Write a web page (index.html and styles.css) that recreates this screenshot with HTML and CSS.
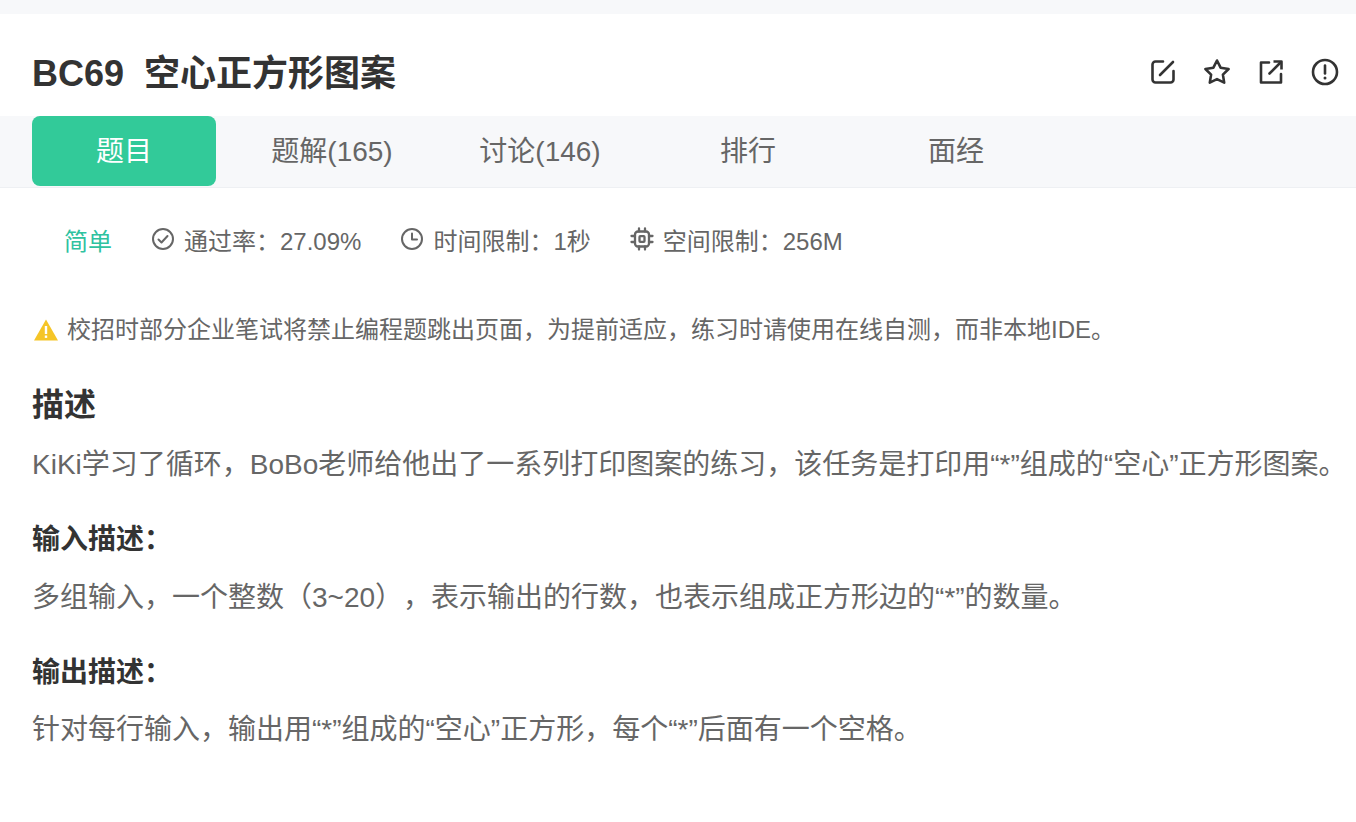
FILE: index.html
```html
<!DOCTYPE html>
<html lang="zh-CN">
<head>
<meta charset="utf-8">
<title>BC69 空心正方形图案</title>
<link rel="stylesheet" href="styles.css">
</head>
<body>
<div class="top-strip"></div>
<header class="head">
  <h1 class="title">BC69&nbsp; 空心正方形图案</h1>
  <div class="actions">
    <svg class="act" viewBox="0 0 28 28" fill="none" stroke="#333" stroke-width="2.6" stroke-linecap="round" stroke-linejoin="round"><path d="M14 3.500H6.500a3 3 0 0 0-3 3v15a3 3 0 0 0 3 3h15a3 3 0 0 0 3-3V13"/><path d="M11 17L24 4"/></svg>
    <svg class="act" viewBox="0 0 28 28" fill="none" stroke="#333" stroke-width="2.6" stroke-linejoin="round"><path d="M14 2.500l3.600 7.200 8 1.300-5.700 5.600 1.300 8-7.200-3.500-7.200 3.500 1.300-8L2.400 11l8-1.300z"/></svg>
    <svg class="act" viewBox="0 0 28 28" fill="none" stroke="#333" stroke-width="2.6" stroke-linecap="round" stroke-linejoin="round"><path d="M12 4.500H4v20h20V16"/><path d="M12.500 15.500L23.500 4.500"/><path d="M16.500 3.500h8v8" stroke-linecap="butt"/></svg>
    <svg class="act" viewBox="0 0 28 28" fill="none" stroke="#333" stroke-width="2.600"><circle cx="14" cy="14" r="12"/><path d="M14 7.500v8" stroke-linecap="round"/><circle cx="14" cy="20" r="1.500" fill="#333" stroke="none"/></svg>
  </div>
</header>
<nav class="tabs">
  <a class="tab active">题目</a>
  <a class="tab">题解(165)</a>
  <a class="tab">讨论(146)</a>
  <a class="tab">排行</a>
  <a class="tab">面经</a>
</nav>
<main class="content">
  <div class="meta">
    <span class="level">简单</span>
    <span class="stat">
      <svg class="ic" viewBox="0 0 24 24" fill="none" stroke="#666" stroke-width="2" stroke-linecap="round" stroke-linejoin="round"><circle cx="12" cy="12" r="10"/><path d="M7.500 12.500l3 3 6-6.500"/></svg>
      通过率：27.09%</span>
    <span class="stat">
      <svg class="ic" viewBox="0 0 24 24" fill="none" stroke="#666" stroke-width="2" stroke-linecap="round" stroke-linejoin="round"><circle cx="12" cy="12" r="10"/><path d="M12 6.500V12.500H17"/></svg>
      时间限制：1秒</span>
    <span class="stat">
      <svg class="ic" viewBox="0 0 24 24" fill="none" stroke="#666" stroke-width="2.300" stroke-linecap="round"><rect x="5" y="4.500" width="14" height="15" rx="3"/><rect x="9.500" y="9.200" width="5" height="5.600" rx="0.800"/><path d="M9 1.500v3M15 1.500v3M9 19.500v3M15 19.500v3M1.500 9H5M1.500 15H5M19 9h3.500M19 15h3.500"/></svg>
      空间限制：256M</span>
  </div>
  <p class="notice">
    <svg class="warn" viewBox="0 0 24 22"><path d="M12 0.500L24 21.500H0z" fill="#f5c527"/><rect x="10.800" y="7" width="2.400" height="8" fill="#fff"/><rect x="10.800" y="16.500" width="2.400" height="2.400" fill="#fff"/></svg>
    校招时部分企业笔试将禁止编程题跳出页面，为提前适应，练习时请使用在线自测，而非本地IDE。
  </p>
  <h2 class="h-main">描述</h2>
  <p class="body">KiKi学习了循环，BoBo老师给他出了一系列打印图案的练习，该任务是打印用“*”组成的“空心”正方形图案。</p>
  <h3 class="h-sub">输入描述：</h3>
  <p class="body">多组输入，一个整数（3~20），表示输出的行数，也表示组成正方形边的“*”的数量。</p>
  <h3 class="h-sub">输出描述：</h3>
  <p class="body">针对每行输入，输出用“*”组成的“空心”正方形，每个“*”后面有一个空格。</p>
</main>
</body>
</html>
```
FILE: styles.css
```css
* { box-sizing: border-box; }
html, body { margin: 0; padding: 0; }
body {
  width: 1356px;
  height: 822px;
  overflow: hidden;
  background: #fff;
  color: #666;
  font-family: "Liberation Sans", "Noto Sans CJK SC", sans-serif;
  text-spacing-trim: space-all;
}
.top-strip { height: 14px; background: #f7f8fa; }
.head {
  height: 102px;
  padding: 16px 17px 0 32px;
  display: flex;
  align-items: center;
  justify-content: space-between;
}
.title {
  margin: 2px 0 0;
  font-size: 36px;
  line-height: 50px;
  font-weight: 700;
  color: #333;
}
.actions { display: flex; gap: 26px; margin-bottom: 2px; }
.act { width: 28px; height: 28px; display: block; }
.tabs {
  height: 72px;
  padding-left: 32px;
  display: flex;
  gap: 24px;
  background: #f7f8fa;
  border-bottom: 1px solid #eef0f3;
}
.tab {
  width: 184px;
  height: 70px;
  padding-bottom: 4px;
  display: flex;
  align-items: center;
  justify-content: center;
  font-size: 28px;
  color: #666;
  border-radius: 8px;
}
.tab.active { background: #32ca99; color: #fff; }
.content { padding: 0 0 0 32px; }
.meta {
  height: 54px;
  margin-top: 27px;
  padding-left: 32px;
  display: flex;
  align-items: center;
  font-size: 24px;
  line-height: 32px;
}
.level { color: #2fc29f; margin-right: 40px; }
.stat { display: inline-flex; align-items: center; margin-right: 40px; white-space: nowrap; }
.ic { width: 24px; height: 24px; margin: 0 9px 6px -1px; }
.notice {
  margin: 44px 0 0;
  display: flex;
  align-items: center;
  font-size: 24px;
  line-height: 34px;
  white-space: nowrap;
}
.warn { width: 24px; height: 22px; margin: 0 9px 0 2px; flex: none; }
.h-main {
  margin: 36px 0 0;
  font-size: 32px;
  line-height: 44px;
  font-weight: 700;
  color: #333;
}
.body {
  margin: 18px 0 0;
  font-size: 28px;
  line-height: 40px;
  white-space: nowrap;
}
.h-sub {
  margin: 35px 0 0;
  font-size: 28px;
  line-height: 40px;
  font-weight: 700;
  color: #333;
}
.body:last-child { margin-top: 17px; }
```
